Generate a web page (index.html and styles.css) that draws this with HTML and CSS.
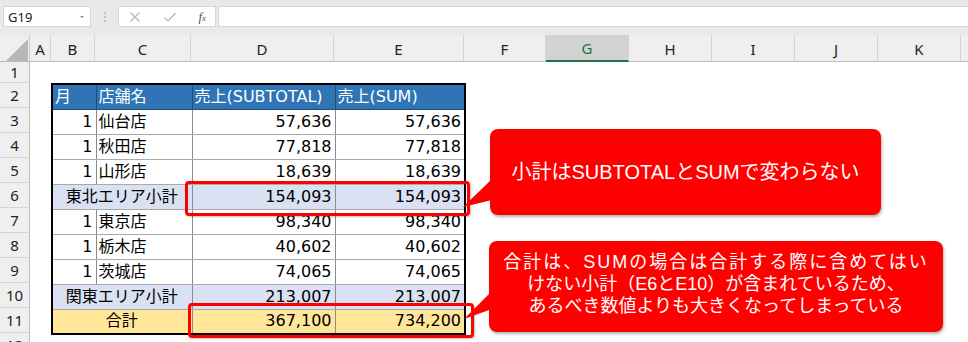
FILE: index.html
```html
<!DOCTYPE html>
<html lang="ja">
<head>
<meta charset="utf-8">
<title>SUBTOTAL vs SUM</title>
<link rel="stylesheet" href="styles.css">
</head>
<body>
<div class="app">
  <div class="toolbar">
    <div class="namebox"><span class="ref">G19</span><span class="caret"></span></div>
    <div class="grip"><span></span><span></span><span></span></div>
    <div class="fnbox">
      <svg class="ico" width="12" height="12" viewBox="0 0 12 12"><path d="M1.5 1.5 L10.5 10.5 M10.5 1.5 L1.5 10.5" stroke="#b3b3b3" stroke-width="1.2" fill="none"/></svg>
      <svg class="ico" width="14" height="12" viewBox="0 0 14 12"><path d="M1.5 6.5 L5 10 L12.5 2" stroke="#b3b3b3" stroke-width="1.2" fill="none"/></svg>
      <span class="fx">f<span class="fxs">x</span></span>
    </div>
    <div class="formula"></div>
  </div>

  <div class="sheet">
    <div class="corner"><svg width="30" height="27" viewBox="0 0 30 27"><polygon points="6,26 28,26 28,4" fill="#b7b7b7"/></svg></div>
    <div class="colh">A</div>
    <div class="colh">B</div>
    <div class="colh">C</div>
    <div class="colh">D</div>
    <div class="colh">E</div>
    <div class="colh">F</div>
    <div class="colh sel">G</div>
    <div class="colh">H</div>
    <div class="colh">I</div>
    <div class="colh">J</div>
    <div class="colh">K</div>
    <div class="colh last"></div>

    <div class="rowh r1">1</div>
    <div class="rowh r2">2</div>
    <div class="rowh r3">3</div>
    <div class="rowh r4">4</div>
    <div class="rowh r5">5</div>
    <div class="rowh r6">6</div>
    <div class="rowh r7">7</div>
    <div class="rowh r8">8</div>
    <div class="rowh r9">9</div>
    <div class="rowh r10">10</div>
    <div class="rowh r11">11</div>
    <div class="rowh r12">12</div>

    <table class="sales">
      <colgroup><col class="cb"><col class="cc"><col class="cd"><col class="ce"></colgroup>
      <tr class="head"><th class="hb">月</th><th class="hc">店舗名</th><th class="hd">売上(SUBTOTAL)</th><th>売上(SUM)</th></tr>
      <tr><td class="num">1</td><td class="name">仙台店</td><td class="num">57,636</td><td class="num">57,636</td></tr>
      <tr><td class="num">1</td><td class="name">秋田店</td><td class="num">77,818</td><td class="num">77,818</td></tr>
      <tr><td class="num">1</td><td class="name">山形店</td><td class="num">18,639</td><td class="num">18,639</td></tr>
      <tr class="sub"><td colspan="2" class="center">東北エリア小計</td><td class="num">154,093</td><td class="num">154,093</td></tr>
      <tr><td class="num">1</td><td class="name">東京店</td><td class="num">98,340</td><td class="num">98,340</td></tr>
      <tr><td class="num">1</td><td class="name">栃木店</td><td class="num">40,602</td><td class="num">40,602</td></tr>
      <tr><td class="num">1</td><td class="name">茨城店</td><td class="num">74,065</td><td class="num">74,065</td></tr>
      <tr class="sub"><td colspan="2" class="center">関東エリア小計</td><td class="num">213,007</td><td class="num">213,007</td></tr>
      <tr class="total"><td colspan="2" class="center">合計</td><td class="num">367,100</td><td class="num">734,200</td></tr>
    </table>
  </div>

  <div class="hl hl1"></div>
  <div class="hl hl2"></div>

  <svg class="wedges" width="968" height="342" viewBox="0 0 968 342">
    <polygon points="492,179 492,200 463,207" fill="#ff0000"/>
    <polygon points="492,291 492,309 464,319" fill="#ff0000"/>
  </svg>

  <div class="callout c1">小計はSUBTOTALとSUMで変わらない</div>
  <div class="callout c2"><span class="wide">合計は、SUMの場合は合計する際に含めてはい</span><br>けない小計（E6とE10）が含まれているため、<br>あるべき数値よりも大きくなってしまっている</div>
</div>
</body>
</html>
```

FILE: styles.css
```css
* { box-sizing: border-box; }
html, body { margin: 0; padding: 0; }
body { width: 968px; height: 342px; overflow: hidden; background: #fff; }

.app {
  position: relative;
  width: 968px;
  height: 342px;
  display: flex;
  flex-direction: column;
  font-family: "Noto Sans", "Noto Sans CJK JP", sans-serif;
}

/* formula bar */
.toolbar {
  height: 35px;
  flex: none;
  background: #e9e9e9;
  display: flex;
  align-items: flex-start;
  padding-top: 6px;
}
.namebox {
  margin-left: 3px;
  width: 88px;
  height: 21px;
  background: #fff;
  border: 1px solid #d6d6d6;
  display: flex;
  align-items: center;
  justify-content: space-between;
  padding: 0 6px 0 4px;
  font-size: 13px;
  color: #222;
}
.caret {
  width: 0; height: 0;
  border-left: 2px solid transparent;
  border-right: 2px solid transparent;
  border-top: 2px solid #8a8a8a;
}
.grip {
  width: 27px;
  height: 21px;
  display: flex;
  flex-direction: column;
  align-items: center;
  justify-content: center;
  gap: 2px;
}
.grip span { width: 2px; height: 2px; background: #c2c2c2; display: block; }
.fnbox {
  width: 98px;
  height: 21px;
  background: #fff;
  border: 1px solid #d6d6d6;
  display: flex;
  align-items: center;
  justify-content: space-between;
  padding: 0 9px 0 10px;
}
.ico { display: block; }
.fx {
  font-family: "Liberation Serif", "DejaVu Serif", serif;
  font-style: italic;
  font-size: 13px;
  color: #555;
}
.fxs { font-size: 9px; }
.formula {
  margin-left: 2px;
  flex: 1;
  height: 21px;
  background: #fff;
  border: 1px solid #d6d6d6;
  border-right: none;
}

/* sheet grid */
.sheet {
  flex: 1;
  display: grid;
  grid-template-columns: 30px 21px 44px 96px 143px 130px 82px 83px 83px 83px 83px 83px 1fr;
  grid-template-rows: 27px 21px repeat(10, 25px) 1fr;
  background: #fff;
}
.corner {
  grid-column: 1;
  grid-row: 1;
  background: #efefef;
  border-right: 1px solid #c8c8c8;
  border-bottom: 1px solid #bdbdbd;
}
.corner svg { display: block; }
.colh {
  grid-row: 1;
  background: #efefef;
  border-right: 1px solid #d4d4d4;
  border-bottom: 1px solid #bdbdbd;
  display: flex;
  align-items: center;
  justify-content: center;
  font-size: 15px;
  color: #222;
  padding-top: 1px;
}
.colh.sel {
  background: #d3d3d3;
  color: #217346;
  border-bottom: 2px solid #217346;
}
.colh.last { border-right: none; }
.rowh {
  grid-column: 1;
  background: #efefef;
  border-right: 1px solid #bdbdbd;
  border-bottom: 1px solid #d4d4d4;
  display: flex;
  align-items: center;
  justify-content: center;
  font-size: 15px;
  color: #222;
}
.r1 { grid-row: 2; }
.r2 { grid-row: 3; }
.r3 { grid-row: 4; }
.r4 { grid-row: 5; }
.r5 { grid-row: 6; }
.r6 { grid-row: 7; }
.r7 { grid-row: 8; }
.r8 { grid-row: 9; }
.r9 { grid-row: 10; }
.r10 { grid-row: 11; }
.r11 { grid-row: 12; }
.r12 { grid-row: 13; align-items: flex-start; padding-top: 2px; }

/* data table */
.sales {
  grid-column: 3 / 7;
  grid-row: 3 / 13;
  width: 100%;
  height: 100%;
  border-collapse: collapse;
  table-layout: fixed;
  border: 2px solid #000;
  font-family: "DejaVu Sans", "Noto Sans CJK JP", sans-serif;
  font-size: 16px;
  color: #000;
}
.cb { width: 44px; }
.cc { width: 96px; }
.cd { width: 143px; }
.ce { width: 130px; }
.sales tr { height: 25px; }
.sales th, .sales td {
  padding: 0 3px 0 2px;
  line-height: 22px;
  white-space: nowrap;
  overflow: hidden;
  border-top: 1px solid #a9a9a9;
  border-bottom: 1px solid #a9a9a9;
  border-left: 1px solid #8c8c8c;
  border-right: 1px solid #8c8c8c;
}
.sales th {
  background: #2f75b5;
  color: #fff;
  font-weight: normal;
  text-align: left;
  border-top: 2px solid #000;
  border-bottom: 1px solid #1f4e79;
  border-left: 1px solid #1f4e79;
  border-right: 1px solid #1f4e79;
}
.sales th.hb { border-right: 1px dotted #1f3f5f; }
.sales td.num { text-align: right; }
.sales td.name { text-align: left; }
.sales td.center { text-align: center; }
.sales tr.sub td { background: #d9e1f2; }
.sales tr.total td { background: #ffe699; border-bottom: 2px solid #000; }

/* highlight boxes */
.hl {
  position: absolute;
  border: 3px solid #ff0000;
  border-radius: 4px;
  box-shadow: 1px 1px 2px rgba(0, 0, 0, 0.25);
}
.hl1 { left: 185px; top: 181px; width: 285px; height: 35px; }
.hl2 { left: 188px; top: 303px; width: 286px; height: 35px; }

.wedges { position: absolute; left: 0; top: 0; pointer-events: none; }

/* callouts */
.callout {
  position: absolute;
  background: #ff0000;
  color: #fff;
  border-radius: 8px;
  box-shadow: 1px 2px 3px rgba(0, 0, 0, 0.3);
  display: flex;
  align-items: center;
  justify-content: center;
  text-align: center;
  font-family: "Liberation Sans", "Noto Sans CJK JP", sans-serif;
}
.c1 {
  left: 490px; top: 129px; width: 391px; height: 86px;
  font-size: 20px;
  padding-bottom: 4px;
}
.c2 {
  display: block;
  left: 489px; top: 241px; width: 454px; height: 91px;
  font-size: 18px;
  line-height: 22px;
  padding-top: 10px;
}
.c2 .wide { letter-spacing: 2px; }
```
